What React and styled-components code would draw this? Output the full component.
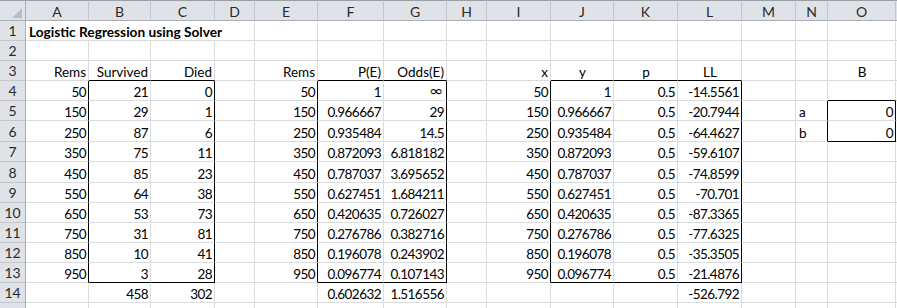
import React from 'react';
import styled, { createGlobalStyle } from 'styled-components';

const GlobalStyle = createGlobalStyle`
  body {
    margin: 0;
    background: #fff;
    font-family: Lato, "Liberation Sans", "DejaVu Sans", sans-serif;
  }
`;

const GRID = '#dadcdd';
const HEAD_BG = '#dfe3e8';
const HEAD_LINE = '#c4c8cd';

// last column is only a sliver at the window edge, so it has no letter
const LETTERS = ['A', 'B', 'C', 'D', 'E', 'F', 'G', 'H', 'I', 'J', 'K', 'L', 'M', 'N', 'O', ''];
const COLS = [63, 62, 64, 40, 63, 66, 63, 40, 64, 63, 64, 64, 54, 32, 68, 40];
const ROWS = [20, 20, 20, 20, 20, 21, 20, 21, 20, 20, 20, 20, 20, 20, 20];

// bordered ranges: [firstRow, lastRow, firstCol, lastCol]
const BOXES = [
  [4, 13, 2, 3],
  [4, 13, 6, 7],
  [4, 13, 10, 12],
  [5, 6, 15, 15],
];

const boxAt = (r, c) => {
  const i = BOXES.findIndex(([r1, r2, c1, c2]) => r >= r1 && r <= r2 && c >= c1 && c <= c2);
  return i + 1;
};

const rems = [50, 150, 250, 350, 450, 550, 650, 750, 850, 950];
const survived = [21, 29, 87, 75, 85, 64, 53, 31, 10, 3];
const died = [0, 1, 6, 11, 23, 38, 73, 81, 41, 28];
const pE = ['1', '0.966667', '0.935484', '0.872093', '0.787037', '0.627451', '0.420635', '0.276786', '0.196078', '0.096774'];
const odds = ['∞', '29', '14.5', '6.818182', '3.695652', '1.684211', '0.726027', '0.382716', '0.243902', '0.107143'];
const ll = ['-14.5561', '-20.7944', '-64.4627', '-59.6107', '-74.8599', '-70.701', '-87.3365', '-77.6325', '-35.3505', '-21.4876'];

// cells[row][col] = { v, align }
const cells = {};
const put = (r, c, v, align = 'right') => {
  cells[r] = cells[r] || {};
  cells[r][c] = { v, align };
};

put(3, 1, 'Rems');
put(3, 2, 'Survived');
put(3, 3, 'Died');
put(3, 5, 'Rems');
put(3, 6, 'P(E)');
put(3, 7, 'Odds(E)');
put(3, 9, 'x');
put(3, 10, 'y', 'center');
put(3, 11, 'p', 'center');
put(3, 12, 'LL', 'center');
put(3, 15, 'B', 'center');
rems.forEach((x, i) => {
  const r = i + 4;
  put(r, 1, x);
  put(r, 2, survived[i]);
  put(r, 3, died[i]);
  put(r, 5, x);
  put(r, 6, pE[i]);
  put(r, 7, odds[i]);
  put(r, 9, x);
  put(r, 10, pE[i]);
  put(r, 11, '0.5');
  put(r, 12, ll[i]);
});
put(5, 14, 'a', 'left');
put(6, 14, 'b', 'left');
put(5, 15, 0);
put(6, 15, 0);
put(14, 2, 458);
put(14, 3, 302);
put(14, 6, '0.602632');
put(14, 7, '1.516556');
put(14, 12, '-526.792');

const isNumeric = (v) => /^-?[0-9.]+$/.test(String(v));

const Frame = styled.div`
  width: 897px;
  height: 308px;
  overflow: hidden;
`;

const Sheet = styled.div`
  display: grid;
  grid-template-columns: 26px ${COLS.map((w) => `${w}px`).join(' ')};
  grid-template-rows: 21px ${ROWS.map((h) => `${h}px`).join(' ')};
  font-size: 13.5px;
  color: #000;
`;

const Corner = styled.div`
  background: ${HEAD_BG};
  border-top: 1px solid #9a9fa5;
  border-right: 1px solid #a9aeb4;
  border-bottom: 1px solid #a9aeb4;
  box-sizing: border-box;
  display: flex;
  align-items: flex-end;
  justify-content: flex-end;
  padding: 0 3px 2px 0;
`;

const ColHead = styled.div`
  background: ${HEAD_BG};
  border-top: 1px solid #9a9fa5;
  border-right: 1px solid ${HEAD_LINE};
  border-bottom: 1px solid #a9aeb4;
  box-sizing: border-box;
  display: flex;
  align-items: center;
  justify-content: center;
  color: #2a2a2a;
  font-size: 14px;
  padding-top: 1px;
`;

const RowHead = styled.div`
  background: ${HEAD_BG};
  border-right: 1px solid #a9aeb4;
  border-bottom: 1px solid ${HEAD_LINE};
  box-sizing: border-box;
  display: flex;
  align-items: center;
  justify-content: center;
  color: #2a2a2a;
  font-size: 14px;
`;

const Cell = styled.div`
  grid-column: span ${(p) => p.$span || 1};
  box-sizing: border-box;
  border-right: 1px solid ${(p) => (p.$right ? '#000' : GRID)};
  border-bottom: 1px solid ${(p) => (p.$bottom ? '#000' : GRID)};
  display: flex;
  align-items: flex-end;
  justify-content: ${(p) =>
    p.$align === 'left' ? 'flex-start' : p.$align === 'center' ? 'center' : 'flex-end'};
  padding: 0 2px 0 3px;
  line-height: 16px;
  white-space: nowrap;
  letter-spacing: ${(p) => (p.$num ? '-0.55px' : '0')};
  font-weight: ${(p) => (p.$bold ? 700 : 400)};
  font-size: ${(p) => (p.$bold ? '13.7px' : 'inherit')};
  overflow: visible;
`;

const InfinityMark = styled.span`
  font-family: "DejaVu Sans", sans-serif;
  font-size: 18px;
  line-height: 18px;
  transform: scaleY(0.8);
`;

const CornerMark = () => (
  <svg width="10" height="10" viewBox="0 0 10 10">
    <polygon points="10,0 10,10 0,10" fill="#b9bdc2" />
  </svg>
);

const App = () => {
  const rows = ROWS.map((_, i) => i + 1);

  return (
    <Frame>
      <GlobalStyle />
      <Sheet>
        <Corner>
          <CornerMark />
        </Corner>
        {LETTERS.map((l, i) => (
          <ColHead key={i}>{l}</ColHead>
        ))}
        {rows.map((r) => {
          // row 15 is cut by the window before its number shows
          const out = [<RowHead key={`h${r}`}>{r < 15 ? r : ''}</RowHead>];
          for (let c = 1; c <= LETTERS.length; c++) {
            const edgeRight = boxAt(r, c) !== boxAt(r, c + 1);
            const edgeBottom = boxAt(r, c) !== boxAt(r + 1, c);
            if (r === 1 && c === 1) {
              out.push(
                <Cell key={`${r}-${c}`} $span={4} $align="left" $bold>
                  Logistic Regression using Solver
                </Cell>
              );
              c += 3;
              continue;
            }
            const cell = cells[r] && cells[r][c];
            let content = '';
            if (cell) content = cell.v === '∞' ? <InfinityMark>∞</InfinityMark> : cell.v;
            out.push(
              <Cell
                key={`${r}-${c}`}
                $align={cell ? cell.align : 'right'}
                $num={cell && isNumeric(cell.v)}
                $right={edgeRight}
                $bottom={edgeBottom}
              >
                {content}
              </Cell>
            );
          }
          return out;
        })}
      </Sheet>
    </Frame>
  );
};

export default App;
